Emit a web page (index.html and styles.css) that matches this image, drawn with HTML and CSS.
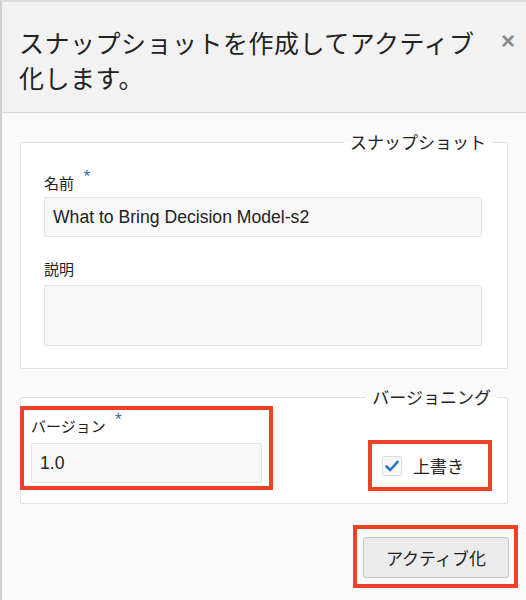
FILE: index.html
```html
<!DOCTYPE html>
<html lang="ja">
<head>
<meta charset="utf-8">
<link rel="stylesheet" href="styles.css">
</head>
<body>
<div class="dialog">
  <div class="header">
    <h1 class="title">スナップショットを作成してアクティブ化します。</h1>
    <span class="close">×</span>
  </div>
  <div class="content">
    <fieldset class="group group-snap">
      <legend>スナップショット</legend>
      <label class="lbl">名前 <span class="req">*</span></label>
      <input class="field" type="text" value="What to Bring Decision Model-s2">
      <label class="lbl lbl-desc">説明</label>
      <textarea class="field area"></textarea>
    </fieldset>
    <fieldset class="group group-ver">
      <legend>バージョニング</legend>
      <div class="ver-row">
        <div class="mark mark-ver">
          <label class="lbl">バージョン <span class="req">*</span></label>
          <input class="field field-ver" type="text" value="1.0">
        </div>
        <div class="mark mark-check">
          <span class="cbox"><svg width="16" height="16" viewBox="0 0 16 16"><path d="M2.5 8.5 L6.2 12 L13.5 3.8" fill="none" stroke="#2f74c0" stroke-width="2.6" stroke-linecap="round" stroke-linejoin="round"/></svg></span>
          <span class="cl">上書き</span>
        </div>
      </div>
    </fieldset>
    <div class="footer">
      <div class="mark mark-btn">
        <button class="btn" type="button">アクティブ化</button>
      </div>
    </div>
  </div>
</div>
</body>
</html>
```

FILE: styles.css
```css
* { box-sizing: border-box; }
html, body { margin: 0; padding: 0; }
body {
  width: 526px;
  height: 600px;
  overflow: hidden;
  background: #fafafa;
  font-family: "Noto Sans CJK JP", "Liberation Sans", sans-serif;
  color: #222;
}
.dialog {
  height: 600px;
  border-left: 2px solid #cfcfcf;
  border-top: 2px solid #dcdcdc;
  background: #fafafa;
}
.header {
  display: flex;
  align-items: flex-start;
  background: #f2f2f2;
  border-bottom: 1px solid #d4d4d4;
  padding: 23px 11px 15px 17px;
  height: 111px;
}
.title {
  flex: 1;
  margin: 0;
  font-weight: 400;
  font-size: 25px;
  line-height: 35px;
  letter-spacing: 0.5px;
  color: #222;
  max-width: 470px;
}
.close {
  margin-left: auto;
  font-size: 24px;
  line-height: 32px;
  font-weight: 700;
  color: #8a8a8a;
  font-family: "Liberation Sans", sans-serif;
}
.content {
  padding: 17px 18px 0 18px;
}
.group {
  margin: 0;
  border: 1px solid #dce2e9;
  border-radius: 2px;
  background: #fff;
  min-width: 0;
}
.group legend {
  margin-left: auto;
  padding: 0 6px;
  font-size: 17px;
  line-height: 24px;
  color: #222;
}
.group-snap {
  padding: 19px 25px 22px 23px;
}
.group-snap legend {
  margin-right: -10px;
}
.lbl {
  display: block;
  font-size: 15px;
  line-height: 20px;
  color: #222;
}
.req {
  color: #2b6cb3;
  font-family: "Liberation Sans", sans-serif;
  font-size: 17px;
  position: relative;
  top: -7px;
  left: 6px;
}
.field {
  display: block;
  width: 100%;
  height: 40px;
  margin-top: 3px;
  background: #f8f8f8;
  border: 1px solid #e2e2e2;
  border-radius: 2px;
  padding: 0 8px;
  font-family: "Liberation Sans", "Noto Sans CJK JP", sans-serif;
  font-size: 17.6px;
  color: #222;
  outline: none;
}
.lbl-desc {
  margin-top: 22px;
}
.area {
  height: 61px;
  margin-top: 6px;
  resize: none;
}
.group-ver {
  margin-top: 18px;
  padding: 0 15px 13px 0;
}
.group-ver legend {
  line-height: 20px;
  margin-right: -5px;
}
.ver-row {
  display: flex;
  justify-content: space-between;
  align-items: flex-end;
}
.mark {
  border: 4px solid #ee4227;
}
.mark-ver {
  margin: -1px 0 0 -1px;
  width: 253px;
  padding: 6px 7px 3px 7px;
}
.mark-ver .field {
  margin-top: 6px;
}
.mark-check {
  display: flex;
  align-items: center;
  width: 124px;
  height: 51px;
  margin-bottom: -1px;
  padding: 0 0 0 10px;
}
.cbox {
  display: flex;
  align-items: center;
  justify-content: center;
  width: 20px;
  height: 20px;
  border: 1px solid #dcdcdc;
  border-radius: 3px;
  background: #f7f7f7;
}
.cl {
  margin-left: 11px;
  font-size: 17px;
  color: #222;
}
.footer {
  display: flex;
  justify-content: flex-end;
  margin-top: 21px;
  margin-right: -10px;
}
.mark-btn {
  padding: 8px 5px 6px 6px;
}
.btn {
  display: block;
  width: 146px;
  height: 41px;
  background: #ececec;
  border: 1px solid #c6c6c6;
  border-radius: 3px;
  font-family: "Noto Sans CJK JP", sans-serif;
  font-size: 17px;
  color: #222;
  padding: 0;
}
```
